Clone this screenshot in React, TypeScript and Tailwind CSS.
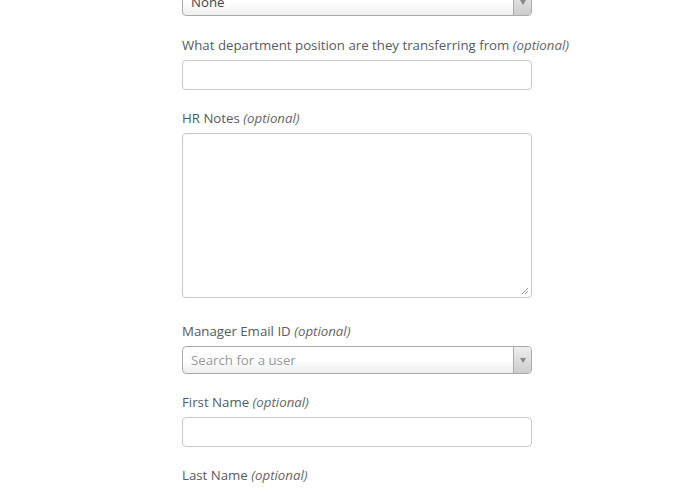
const font = { fontFamily: "'Open Sans', 'Noto Sans', sans-serif" }

function Label({ text }: { text: string }) {
  return (
    <label className="block text-[13.25px] leading-[18px] text-[#555b63] mb-[6px]">
      {text} <em className="text-[#666]">(optional)</em>
    </label>
  )
}

function SelectBox({ value, placeholder }: { value?: string; placeholder?: string }) {
  return (
    <div className="flex h-[28px] w-[350px] rounded-[4px] border border-[#aaa] bg-gradient-to-b from-white from-50% to-[#eee] overflow-hidden">
      <div className={`flex-1 px-[8px] text-[13.25px] leading-[26px] ${value ? "text-[#444]" : "text-[#999]"}`}>
        {value ?? placeholder}
      </div>
      <div className="w-[18px] border-l border-[#aaa] flex items-center justify-center bg-gradient-to-b from-[#eee] to-[#ccc]">
        <span className="block w-0 h-0 border-l-[3px] border-r-[3px] border-t-[5px] border-l-transparent border-r-transparent border-t-[#888]" />
      </div>
    </div>
  )
}

function TextInput() {
  return <div className="h-[30px] w-[350px] rounded-[4px] border border-[#c5c9d3] bg-white" />
}

export default function App() {
  return (
    <div className="w-[699px] h-[504px] bg-white overflow-hidden" style={font}>
      <div className="ml-[182px] -mt-[12px]">
        <SelectBox value="None" />

        <div className="mt-[20px]">
          <Label text="What department position are they transferring from" />
          <TextInput />
        </div>

        <div className="mt-[19px]">
          <Label text="HR Notes" />
          <div className="relative h-[165px] w-[350px] rounded-[4px] border border-[#c5c9d3] bg-white">
            <svg className="absolute right-[2px] bottom-[2px]" width="9" height="9" viewBox="0 0 9 9">
              <path d="M8 2 L2 8 M8 5 L5 8" stroke="#999" strokeWidth="1" />
            </svg>
          </div>
        </div>

        <div className="mt-[24px]">
          <Label text="Manager Email ID" />
          <SelectBox placeholder="Search for a user" />
        </div>

        <div className="mt-[19px]">
          <Label text="First Name" />
          <TextInput />
        </div>

        <div className="mt-[19px]">
          <Label text="Last Name" />
        </div>
      </div>
    </div>
  )
}
